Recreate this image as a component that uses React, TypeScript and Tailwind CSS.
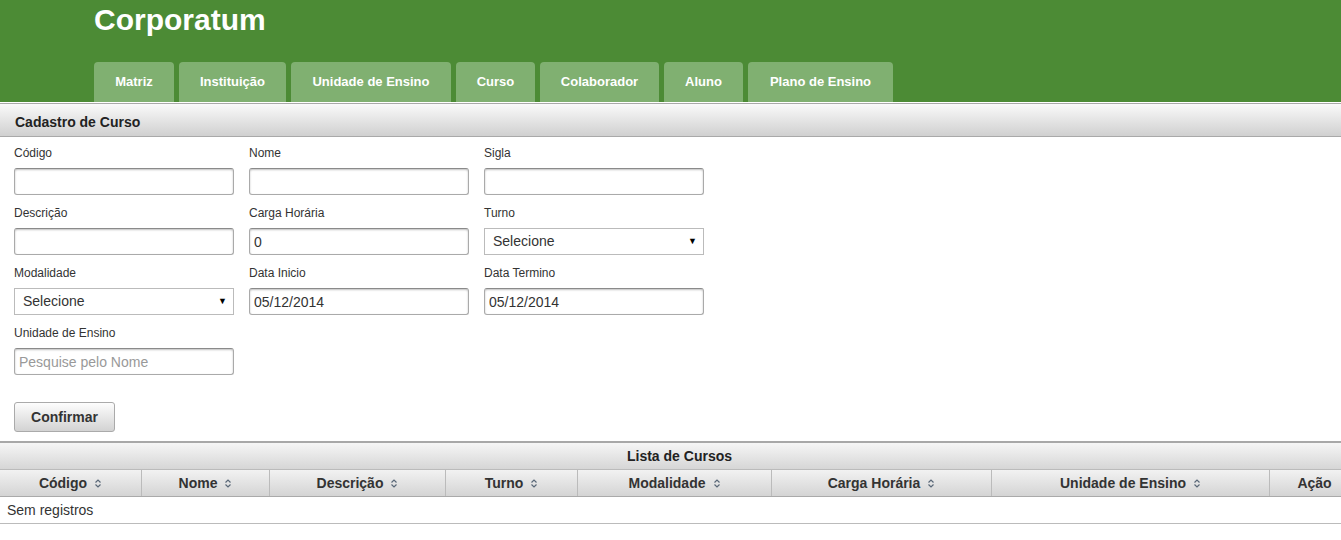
import React from 'react';

const tabs: [string, string][] = [
  ['Matriz', 'w-[80px]'],
  ['Instituição', 'w-[107px]'],
  ['Unidade de Ensino', 'w-[160px]'],
  ['Curso', 'w-[79px]'],
  ['Colaborador', 'w-[119px]'],
  ['Aluno', 'w-[79px]'],
  ['Plano de Ensino', 'w-[145px]'],
];

const columns = ['Código', 'Nome', 'Descrição', 'Turno', 'Modalidade', 'Carga Horária', 'Unidade de Ensino'];

const inputCls =
  'w-[220px] h-[27px] px-[4px] rounded-[3px] border border-[#aaa] border-t-[#8a8a8a] bg-white text-[14px] text-[#333] shadow-[inset_0_1px_2px_rgba(0,0,0,0.25)] outline-none placeholder:text-[#999]';

function SortIcon() {
  return (
    <svg width="8" height="11" viewBox="0 0 8 11" className="ml-[7px] shrink-0">
      <path d="M1.5 4.5 L4 2 L6.5 4.5" fill="none" stroke="#5a6878" strokeWidth="1.2" />
      <path d="M1.5 6.5 L4 9 L6.5 6.5" fill="none" stroke="#5a6878" strokeWidth="1.2" />
    </svg>
  );
}

function Field({ label, children }: { label: string; children: React.ReactNode }) {
  return (
    <div className="flex flex-col">
      <label className="h-[23px] text-[12px] leading-[16px] text-[#333]">{label}</label>
      {children}
    </div>
  );
}

function Select() {
  return (
    <div className="relative w-[220px] h-[27px]">
      <select className="w-full h-full appearance-none border border-[#bbb] bg-white pl-[8px] text-[14px] text-[#333] outline-none">
        <option>Selecione</option>
      </select>
      <span className="pointer-events-none absolute right-[7px] top-[7px] text-[9px] leading-[12px] text-black">▼</span>
    </div>
  );
}

export default function App() {
  return (
    <div className="w-[1341px] h-[540px] overflow-hidden bg-white font-['Liberation_Sans',Arial,sans-serif]">
      {/* Header */}
      <div className="h-[102px] bg-[#4c8b35] pl-[94px]">
        <h1 className="pt-[3px] text-[30px] leading-[34px] font-bold text-white">Corporatum</h1>
        <div className="mt-[25px] flex gap-[5px]">
          {tabs.map(([t, w]) => (
            <div key={t} className={`${w} h-[40px] rounded-t-[4px] bg-[#80b071] flex items-center justify-center text-[13px] font-bold text-white`}>
              {t}
            </div>
          ))}
        </div>
      </div>

      {/* Panel title */}
      <div className="border-t border-white">
        <div className="h-[34px] border-y border-[#a9a9a9] bg-linear-to-b from-[#fafafa] to-[#d0d0d0] pl-[15px] pt-[5px] flex items-center text-[14px] font-bold text-[#222]">
          Cadastro de Curso
        </div>
      </div>

      {/* Form */}
      <div className="px-[14px] pt-[8px]">
        <div className="grid grid-cols-[220px_220px_220px] gap-x-[15px] gap-y-[10px]">
          <Field label="Código"><input className={inputCls} /></Field>
          <Field label="Nome"><input className={inputCls} /></Field>
          <Field label="Sigla"><input className={inputCls} /></Field>
          <Field label="Descrição"><input className={inputCls} /></Field>
          <Field label="Carga Horária"><input className={inputCls} defaultValue="0" /></Field>
          <Field label="Turno"><Select /></Field>
          <Field label="Modalidade"><Select /></Field>
          <Field label="Data Inicio"><input className={inputCls} defaultValue="05/12/2014" /></Field>
          <Field label="Data Termino"><input className={inputCls} defaultValue="05/12/2014" /></Field>
          <Field label="Unidade de Ensino"><input className={inputCls} placeholder="Pesquise pelo Nome" /></Field>
        </div>
        <button className="mt-[27px] w-[101px] h-[30px] rounded-[3px] border border-[#aaa] bg-linear-to-b from-[#fdfdfd] to-[#d3d3d3] text-[14px] font-bold text-[#333]">
          Confirmar
        </button>
      </div>

      {/* Table */}
      <div className="mt-[9px] w-[1359px] border-t-2 border-[#a8a8a8]">
        <div className="h-[27px] border-b border-[#bbb] bg-linear-to-b from-[#f6f6f6] to-[#d6d6d6] flex items-center justify-center text-[14px] font-bold text-[#222]">
          Lista de Cursos
        </div>
        <div className="grid grid-cols-[141px_128px_176px_132px_194px_220px_278px_90px] h-[27px] border-b border-[#aaa] bg-linear-to-b from-[#f2f2f2] to-[#d4d4d4]">
          {columns.map((c, i) => (
            <div key={c} className={`flex items-center justify-center text-[14px] font-bold text-[#333] ${i > 0 ? 'border-l border-[#bbb]' : ''}`}>
              {c}
              <SortIcon />
            </div>
          ))}
          <div className="flex items-center justify-center border-l border-[#bbb] text-[14px] font-bold text-[#333]">Ação</div>
        </div>
        <div className="h-[27px] border-b border-[#bbb] pl-[7px] flex items-center text-[14px] text-[#333]">Sem registros</div>
      </div>
    </div>
  );
}
